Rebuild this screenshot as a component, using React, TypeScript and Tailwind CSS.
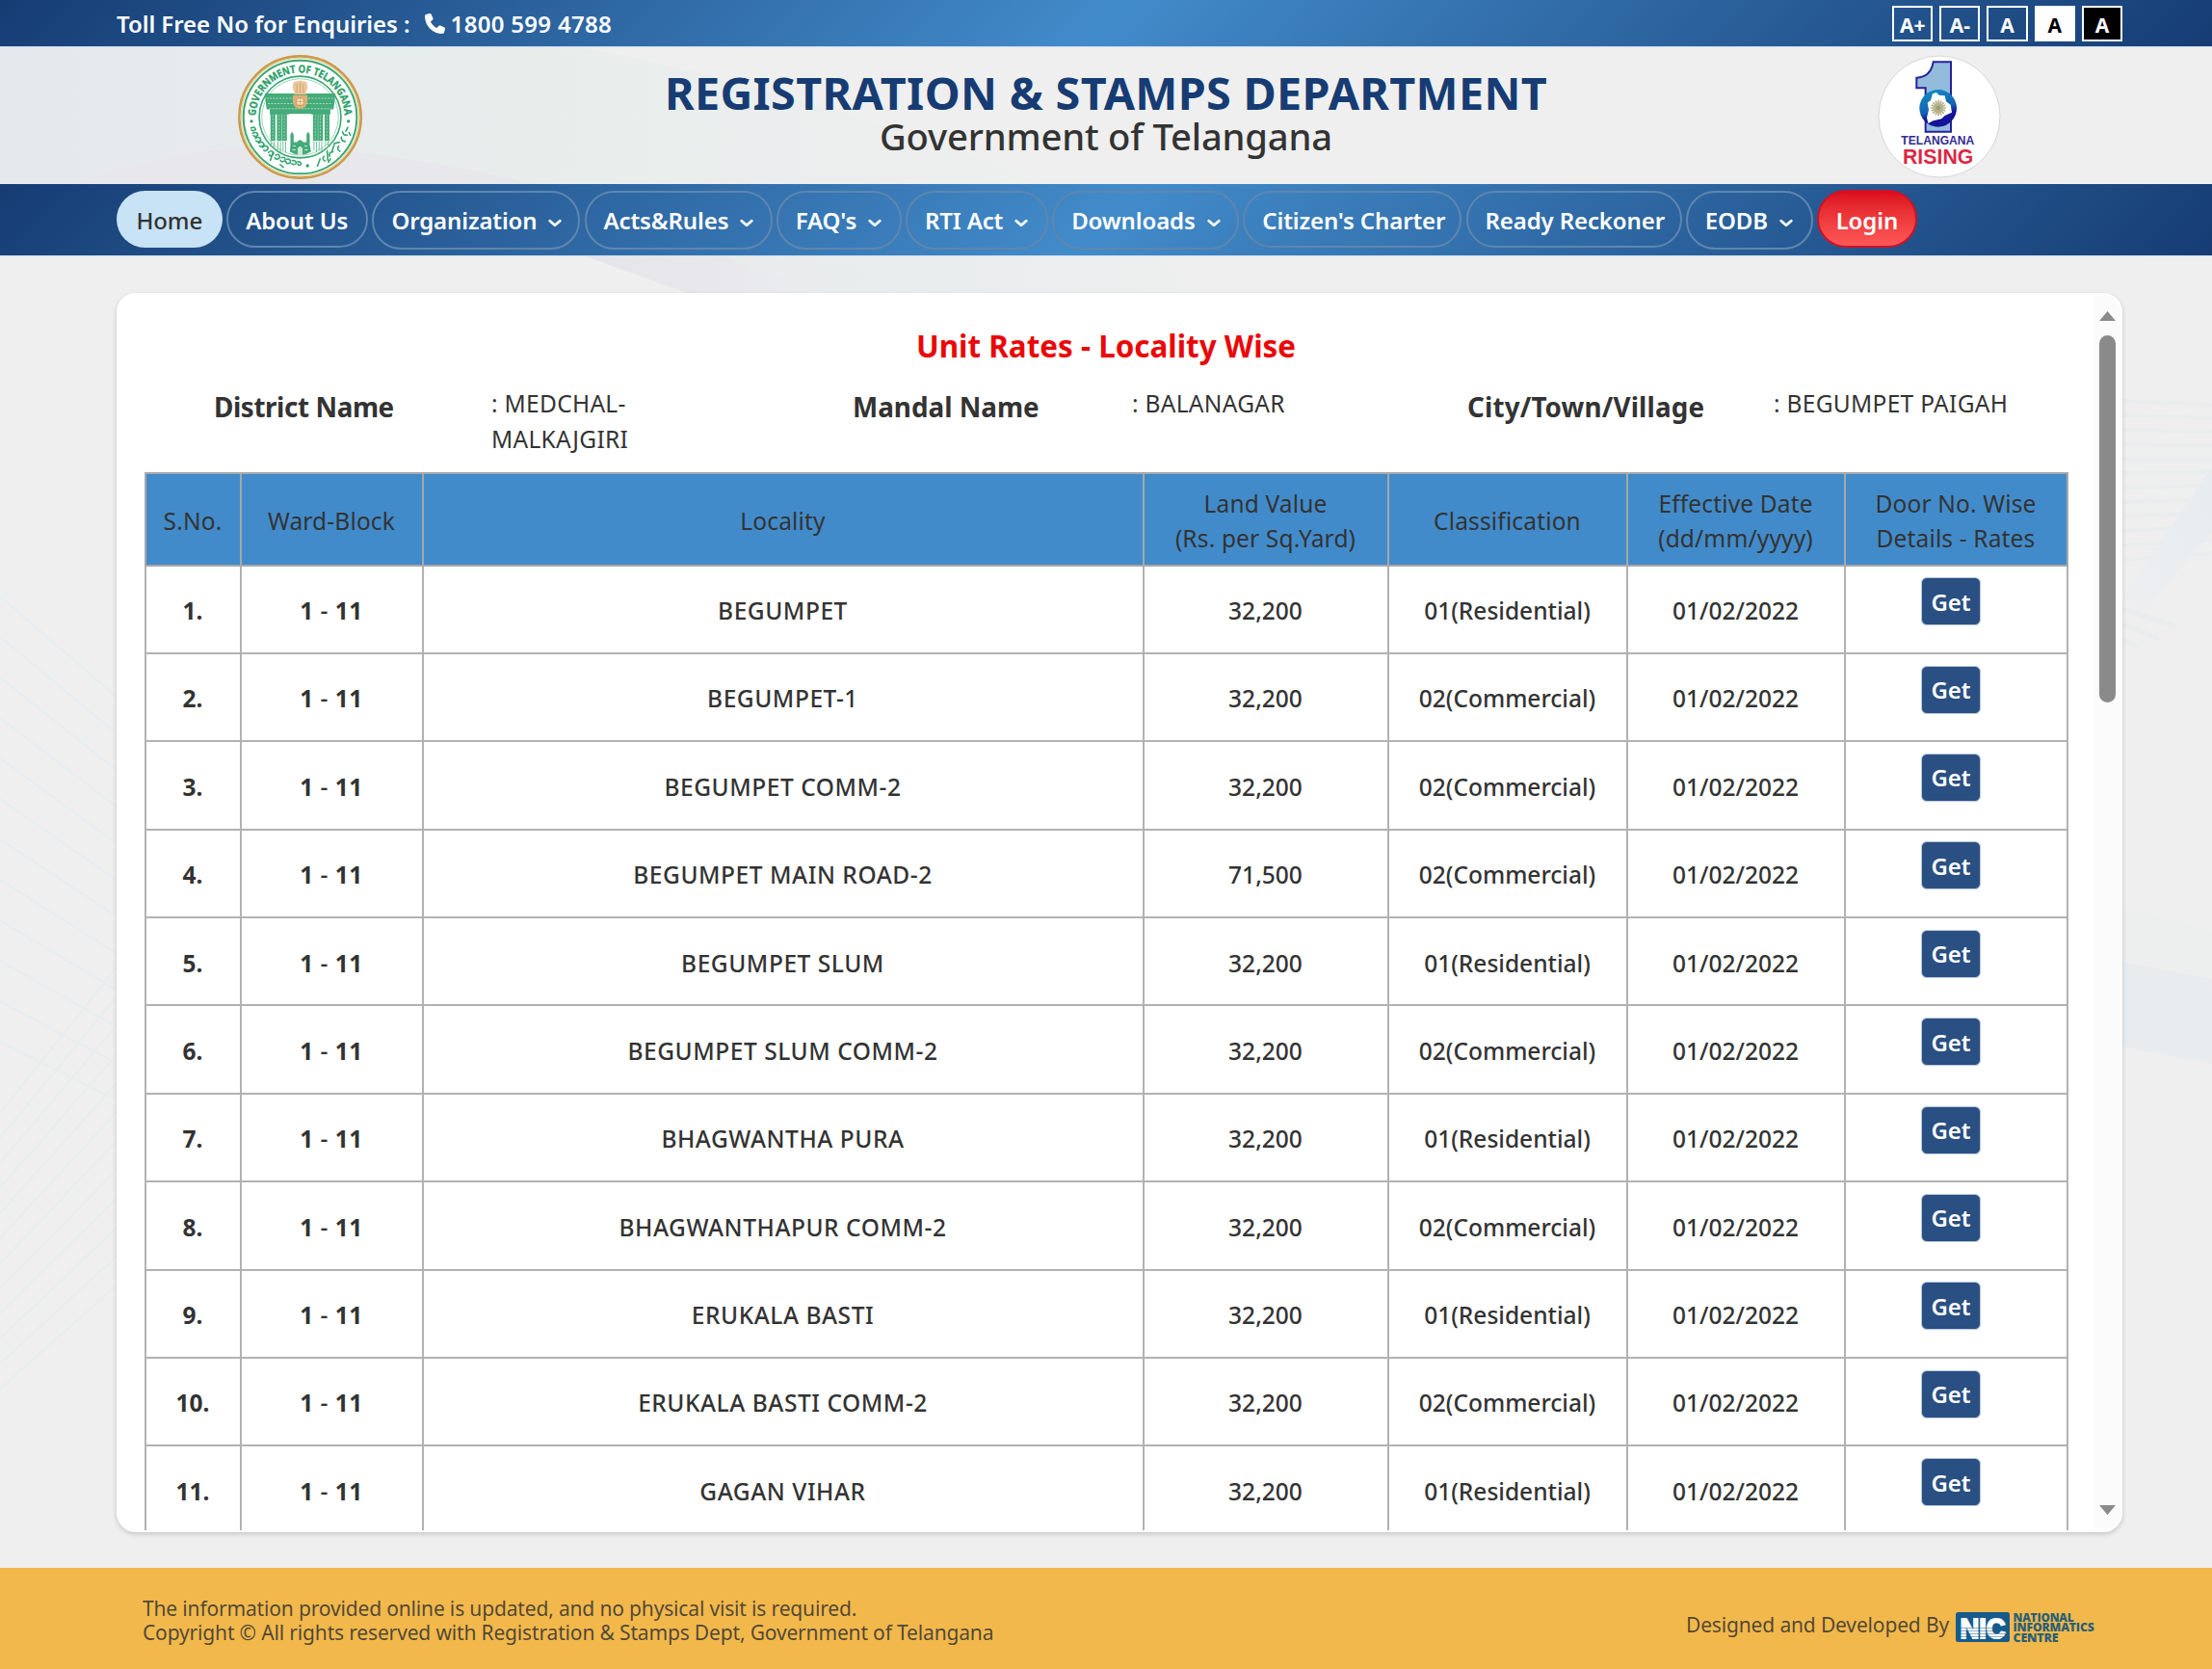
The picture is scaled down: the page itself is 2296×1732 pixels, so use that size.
import type { ReactNode } from "react";

const nav: { label: string; w: string; menu?: boolean }[] = [
  { label: "About Us", w: "w-[147px]" },
  { label: "Organization", w: "w-[216px]", menu: true },
  { label: "Acts&Rules", w: "w-[195px]", menu: true },
  { label: "FAQ's", w: "w-[130px]", menu: true },
  { label: "RTI Act", w: "w-[148px]", menu: true },
  { label: "Downloads", w: "w-[194px]", menu: true },
  { label: "Citizen's Charter", w: "w-[227px]" },
  { label: "Ready Reckoner", w: "w-[224px]" },
  { label: "EODB", w: "w-[132px]", menu: true },
];

const rows: [string, string, string][] = [
  ["BEGUMPET", "32,200", "01(Residential)"],
  ["BEGUMPET-1", "32,200", "02(Commercial)"],
  ["BEGUMPET COMM-2", "32,200", "02(Commercial)"],
  ["BEGUMPET MAIN ROAD-2", "71,500", "02(Commercial)"],
  ["BEGUMPET SLUM", "32,200", "01(Residential)"],
  ["BEGUMPET SLUM COMM-2", "32,200", "02(Commercial)"],
  ["BHAGWANTHA PURA", "32,200", "01(Residential)"],
  ["BHAGWANTHAPUR COMM-2", "32,200", "02(Commercial)"],
  ["ERUKALA BASTI", "32,200", "01(Residential)"],
  ["ERUKALA BASTI COMM-2", "32,200", "02(Commercial)"],
  ["GAGAN VIHAR", "32,200", "01(Residential)"],
];

const columns: { title: ReactNode; w: string }[] = [
  { title: "S.No.", w: "w-[99px]" },
  { title: "Ward-Block", w: "w-[189px]" },
  { title: "Locality", w: "w-[748px]" },
  { title: <>Land Value<br />(Rs. per Sq.Yard)</>, w: "w-[254px]" },
  { title: "Classification", w: "w-[248px]" },
  { title: <>Effective Date<br />(dd/mm/yyyy)</>, w: "w-[226px]" },
  { title: <>Door No. Wise<br />Details - Rates</>, w: "w-[231px]" },
];

function Emblem() {
  const pillars = [152, 172, 188, 284, 300, 320];
  return (
    <svg viewBox="51 21 386 386" className="h-[129px] w-[129px]">
      <circle cx="244" cy="214" r="189" fill="#fff" stroke="#c99a4b" strokeWidth="8" />
      <circle cx="244" cy="214" r="183" fill="none" stroke="#e4d3a0" strokeWidth="4" />
      <circle cx="244" cy="214" r="176" fill="none" stroke="#3aa873" strokeWidth="6" />
      <circle cx="244" cy="214" r="127" fill="none" stroke="#3aa873" strokeWidth="5" />
      <circle cx="244" cy="214" r="119" fill="none" stroke="#6fc09a" strokeWidth="2" />
      <path id="emblem-arc" d="M106 214 A138 138 0 0 1 382 214" fill="none" />
      <text fill="#2c9f67" stroke="#2c9f67" strokeWidth="1" fontFamily="'Open Sans', sans-serif" fontWeight="700" fontSize="33" textLength="424" lengthAdjust="spacingAndGlyphs">
        <textPath href="#emblem-arc" startOffset="4">GOVERNMENT OF TELANGANA</textPath>
      </text>
      <circle cx="93" cy="227" r="5" fill="#2c9f67" />
      <circle cx="394" cy="227" r="5" fill="#2c9f67" />
      <circle cx="267" cy="365" r="5" fill="#2c9f67" />
      <g fill="none" stroke="#3aa873" strokeWidth="5" strokeLinecap="round">
        <path d="M92 248q12-6 14 4q-8 8-13 2M97 264q14-6 16 6q-9 8-14 1M105 280q14-8 17 5q-8 9-15 3M115 295q12-9 17 4q-6 10-14 5M127 308q12-10 18 2q-4 12-14 7M146 324q10-10 16 2q-6 14-14 6M160 322l-8 26M168 332q14-6 12 8q-10 10-14 0M186 340q14-4 11 9q-11 8-14-1M182 362l10 8M203 345q14-2 10 11q-12 6-13-4M220 349q12-1 12 9q-10 6-14 0M237 353q10-1 10 8q-8 5-10-1" />
        <path d="M392 246l-6 12M376 260q2 12 14 10M396 262l4 8M372 276q-2 12 12 14M366 292l-16 4M364 304q-8 10 4 16M350 300l-6 18M346 322q-14 0-10 14M328 318l2 30M318 336q-8 10 4 14M306 344l-8 22M338 344l-6 10" />
      </g>
      <path d="M134 141H354L348 190H338V206H150V190H140Z" fill="#45ab78" />
      <path d="M140 156H348M144 172H344M148 188H340" stroke="#a9d9c0" strokeWidth="3" strokeDasharray="6 4" fill="none" />
      <path d="M210 204H278V290H210Z" fill="#fff" />
      {pillars.map((x) => (
        <g key={x}>
          <rect x={x} y="204" width="15" height="84" fill="#45ab78" />
          <path d={`M${x + 7} 208V286`} stroke="#a9d9c0" strokeWidth="3" strokeDasharray="5 5" />
          <path d={`M${x + 3} 290V${x < 160 || x > 310 ? 304 : 318}M${x + 11} 290V${x < 160 || x > 310 ? 308 : 324}`} stroke="#6fc09a" strokeWidth="3" />
        </g>
      ))}
      <path d="M214 300V268L219 260L224 268V292H234Q244 278 254 292H264V268L269 260L274 268V300L278 322Q244 342 212 322Z" fill="#45ab78" />
      <path d="M238 336V312Q244 302 250 312V336ZM222 304h8M258 304h8M220 316h10M258 316h10" fill="#cfeadd" stroke="#cfeadd" strokeWidth="3" />
      <path d="M222 112Q224 100 236 103Q244 97 252 103Q264 100 266 112Q270 124 262 134V144H226V134Q218 124 222 112Z" fill="#eac79b" />
      <path d="M222 146H266Q272 186 244 188Q216 186 222 146Z" fill="#e0b078" />
      <circle cx="244" cy="166" r="12" fill="#f6e3c8" stroke="#cf9955" strokeWidth="3" />
      <path d="M234 112v28M244 108v32M254 112v28M232 166h24M244 154v24" stroke="#cf9955" strokeWidth="2" fill="none" />
    </svg>
  );
}

function RisingLogo() {
  return (
    <svg viewBox="147 51 384 384" className="h-[128px] w-[128px]">
      <circle cx="339" cy="243" r="189" fill="#fff" stroke="#d6d6d6" strokeWidth="3" />
      <path d="M320 73H375V290H296V154H268V122Q312 120 320 73Z" fill="#93bbdc" stroke="#26219a" strokeWidth="6" />
      <defs>
        <linearGradient id="globe" x1="0" y1="0" x2="0.3" y2="1">
          <stop offset="0.1" stopColor="#1488c2" />
          <stop offset="0.6" stopColor="#1464b4" />
          <stop offset="0.8" stopColor="#14149a" />
        </linearGradient>
      </defs>
      <circle cx="335" cy="217" r="58" fill="url(#globe)" />
      <path d="M318 172L330 168L338 176L356 178L360 196L374 206L378 230L356 240L346 250L320 256L304 264L300 246L306 222L302 200L312 192Z" fill="#fff" />
      <g stroke="#b5b189" strokeWidth="5">
        <path d="M336 192V240M312 216H360M319 199L353 233M353 199L319 233M327 194L345 238M345 194L327 238M314 207L358 225M314 225L358 207" />
      </g>
      <circle cx="336" cy="216" r="6" fill="#8f9a78" />
      <text x="220" y="331" fill="#322c92" fontFamily="'Liberation Sans', sans-serif" fontWeight="700" fontSize="38" textLength="228" lengthAdjust="spacingAndGlyphs">TELANGANA</text>
      <text x="225" y="389" fill="#dc2745" fontFamily="'Liberation Sans', sans-serif" fontWeight="700" fontSize="65" textLength="220" lengthAdjust="spacingAndGlyphs">RISING</text>
    </svg>
  );
}

function NicLogo() {
  return (
    <svg viewBox="0 0 146 34" className="h-[34px] w-[146px] shrink-0 overflow-visible">
      <rect x="0" y="2" width="56" height="31" rx="2.500" fill="#175a8c" />
      <text x="4.500" y="28.500" fontFamily="'Liberation Sans', sans-serif" fontWeight="700" fill="#fff" stroke="#fff" strokeWidth="1.800" fontSize="30" textLength="47" lengthAdjust="spacingAndGlyphs">NIC</text>
      <path d="M4 18.500H52M4 21.500H52M4 24.500H52M4 27.500H52" stroke="#175a8c" strokeWidth="0.800" opacity="0.600" />
      <g fontFamily="'Open Sans', sans-serif" fontWeight="800" fill="#2a5f78" fontSize="12.200">
        <text x="59.500" y="11.600" textLength="63" lengthAdjust="spacingAndGlyphs">NATIONAL</text>
        <text x="59.500" y="22.200" textLength="84" lengthAdjust="spacingAndGlyphs">INFORMATICS</text>
        <text x="59.500" y="32.800" textLength="47" lengthAdjust="spacingAndGlyphs">CENTRE</text>
      </g>
    </svg>
  );
}

function Backdrop() {
  const fan = Array.from({ length: 12 }, (_, i) => i);
  return (
    <svg viewBox="0 0 2296 1732" className="absolute inset-0 h-full w-full">
      <defs>
        <linearGradient id="tint" x1="0" y1="0" x2="1" y2="0">
          <stop offset="0" stopColor="#e5e9ed" />
          <stop offset="0.5" stopColor="#e8edec" />
          <stop offset="1" stopColor="#eeefef" />
        </linearGradient>
        <linearGradient id="mauve" x1="0" y1="0" x2="1" y2="0">
          <stop offset="0" stopColor="#e5e4ea" />
          <stop offset="1" stopColor="#ebecee" />
        </linearGradient>
        <linearGradient id="sage" x1="0" y1="0" x2="1" y2="0">
          <stop offset="0" stopColor="#e9eceb" />
          <stop offset="0.5" stopColor="#eaedee" />
          <stop offset="1" stopColor="#eeefef" />
        </linearGradient>
        <linearGradient id="beam" x1="0" y1="1" x2="1" y2="0">
          <stop offset="0" stopColor="#edeff0" />
          <stop offset="1" stopColor="#e7ecf0" />
        </linearGradient>
      </defs>
      <path d="M0 48H600Q860 100 1090 192H0Z" fill="url(#tint)" />
      <path d="M70 192Q230 140 340 155Q470 168 556 192Z" fill="#e8e7eb" />
      <path d="M745 265L850 304H1250L1200 265Z" fill="url(#sage)" />
      <path d="M605 265L713 304H855L750 265Z" fill="url(#mauve)" />
      <g stroke="#e8edf0" strokeWidth="2.500" fill="none">
        {fan.map((i) => (
          <path key={i} d={`M0 ${619 + i * 42}L122 ${724 + i * 38}`} />
        ))}
      </g>
      <g stroke="#e9edec" strokeWidth="2.500" fill="none">
        {fan.map((i) => (
          <path key={i} d={`M0 ${1441 - i * 26}L122 ${1333 - i * 30}`} />
        ))}
      </g>
      <g stroke="#eaeded" strokeWidth="4" fill="none">
        {fan.map((i) => (
          <path key={i} d={`M2203 ${416 + i * 15}L2296 ${420 + i * 14}`} />
        ))}
        <path d="M2203 632L2258 650M2203 648L2240 662M2203 664L2222 672" strokeWidth="5" />
      </g>
      <path d="M2203 620L2296 484V552L2228 632Z" fill="url(#beam)" />
      <path d="M2203 940L2296 966V1018L2203 998Z" fill="#edefee" />
      <path d="M2203 998L2296 1016V1104L2203 1086Z" fill="#e8ecee" />
    </svg>
  );
}

function Field({ label, value, labelW, valueW }: { label: string; value: string; labelW: string; valueW: string }) {
  return (
    <>
      <div className={`${labelW} shrink-0 whitespace-nowrap pt-1 text-[27.800px] font-bold leading-[36.500px]`}>{label}</div>
      <div className={`${valueW} shrink-0 pt-px text-[24.500px] font-[450] leading-[36.500px] tracking-[0.300px]`}>{value}</div>
    </>
  );
}

export default function App() {
  const access = ["A+", "A-", "A", "A", "A"];
  const bar = "bg-[linear-gradient(135deg,#163c73_0%,#428bca_50%,#163c73_100%)]";
  return (
    <div className="relative flex h-[1732px] w-[2296px] flex-col overflow-hidden bg-[#efefef] font-['Noto_Sans',sans-serif] text-[#333]">
      <Backdrop />

      <div className={`relative flex h-12 shrink-0 items-center justify-between pl-[121px] pr-[93px] text-white ${bar}`}>
        <div className="flex items-center pt-px text-[24px] font-semibold leading-9">
          <span className="whitespace-pre tracking-[-0.050px]">Toll Free No for Enquiries :</span>
          <svg viewBox="0 0 512 512" className="ml-[15px] h-[21px] w-[21px]" fill="currentColor">
            <path d="M164.900 24.600c-7.700-18.600-28-28.500-47.400-23.200l-88 24C12.100 30.200 0 46 0 64C0 311.400 200.600 512 448 512c18 0 33.800-12.100 38.600-29.500l24-88c5.300-19.400-4.600-39.700-23.200-47.400l-96-40c-16.300-6.800-35.200-2.100-46.300 11.600L304.700 368C234.300 334.700 177.300 277.700 144 207.300L193.300 167c13.700-11.200 18.400-30 11.600-46.300l-40-96z" />
          </svg>
          <span className="ml-[6px] tracking-[0.300px]">1800 599 4788</span>
        </div>
        <div className="flex gap-[7px] pt-px">
          {access.map((a, i) => (
            <div
              key={i}
              className={`flex h-[37px] w-[42.200px] items-center justify-center border-2 border-white pt-[3px] text-[21px] font-bold leading-none ${i === 3 ? "bg-white text-black" : i === 4 ? "bg-black" : ""}`}
            >
              {a}
            </div>
          ))}
        </div>
      </div>

      <header className="relative flex h-[143px] shrink-0 items-center justify-between border-t border-[#c9dcf0] pl-[247px] pr-[219px]">
        <div className="pt-[2px]"><Emblem /></div>
        <div className="mr-[29px] flex flex-col items-center whitespace-nowrap pb-[5px]">
          <h1 className="text-[46.700px] font-bold leading-[46px] tracking-[0.350px] text-[#163c73]">REGISTRATION &amp; STAMPS DEPARTMENT</h1>
          <p className="text-[38.200px] font-[470] leading-[44px] tracking-[-0.180px]">Government of Telangana</p>
        </div>
        <div className="pt-[1px]"><RisingLogo /></div>
      </header>

      <nav className={`relative flex h-[75px] shrink-0 gap-[4.200px] border-b border-[#cfe0f0] pl-[120.500px] pt-[7px] text-[24px] font-semibold leading-none tracking-[-0.120px] text-white ${bar}`}>
        <div className="flex h-[59px] w-[110.500px] items-center justify-center rounded-[30px] bg-[#c8e3f6] pt-[2px] font-medium text-[#333]">Home</div>
        {nav.map((n) => (
          <div
            key={n.label}
            className={`flex items-center whitespace-nowrap rounded-[30px] border-2 border-[#5f86ae] pl-[18px] ${n.w} ${n.menu ? "h-[61px]" : "h-[59px] pt-[2px]"}`}
          >
            {n.label}
            {n.menu && (
              <svg viewBox="0 0 14 9" className="ml-[12px] mt-[6px] h-[9px] w-[14px]" fill="none" stroke="currentColor" strokeWidth="2.800" strokeLinecap="round" strokeLinejoin="round">
                <path d="M1.800 2.200L7 6.800L12.200 2.200" />
              </svg>
            )}
          </div>
        ))}
        <div className="flex h-[60px] w-[104px] -translate-y-px items-center justify-center rounded-[30px] border-2 border-[#cf1226] bg-linear-to-b from-[#dc0a1c] to-[#ff5757] pt-[3px]">Login</div>
      </nav>

      <main className="relative mt-[38px] ml-[120.500px] flex h-[1286px] w-[2082.500px] shrink-0 overflow-hidden rounded-[20px] border-2 border-white bg-white shadow-[0_2px_5px_rgba(0,0,0,0.18)]">
        <div className="h-full w-[2050.500px] shrink-0 overflow-hidden pl-[27px]">
          <h2 className="mt-[31px] w-[1997px] text-center text-[31.400px] font-bold leading-[44px] text-[#ea0808]">Unit Rates - Locality Wise</h2>
          <div className="mt-[19px] flex h-[90px] pl-[72.500px]">
            <Field label="District Name" value=": MEDCHAL-MALKAJGIRI" labelW="w-[288px] tracking-[-0.400px]" valueW="w-[375px] pr-[200px]" />
            <Field label="Mandal Name" value=": BALANAGAR" labelW="w-[290px]" valueW="w-[348px]" />
            <Field label="City/Town/Village" value=": BEGUMPET PAIGAH" labelW="w-[318px] tracking-[0.150px]" valueW="w-[260px] whitespace-nowrap" />
          </div>
          <table className="w-[1995px] table-fixed border-collapse text-center text-[24.500px] leading-[36.500px]">
            <thead>
              <tr className="h-[95.500px] bg-[#428bca]">
                {columns.map((c, i) => (
                  <th key={i} className={`${c.w} border-2 border-[#a6a8aa] p-0 pt-[5px] font-[430] tracking-[0.150px]`}>{c.title}</th>
                ))}
              </tr>
            </thead>
            <tbody>
              {rows.map(([loc, value, cls], i) => (
                <tr key={loc} className="h-[91.400px] font-[460] [&>td]:border-2 [&>td]:border-[#b2b2b2] [&>td]:p-0 [&>td]:pt-[4px]">
                  <td className="font-bold">{i + 1}.</td>
                  <td className="tracking-[0.500px]"><b>1</b> - <b>11</b></td>
                  <td className="tracking-[0.550px]">{loc}</td>
                  <td>{value}</td>
                  <td>{cls}</td>
                  <td>{"01/02/2022"}</td>
                  <td>
                    <div className="flex justify-center pb-[20px] pr-[10px]">
                      <button className="h-[50px] w-[62px] rounded-[6px] border border-[#b9c8dc] bg-[#2a4f82] pt-px text-[24px] font-semibold leading-none text-white">Get</button>
                    </div>
                  </td>
                </tr>
              ))}
            </tbody>
          </table>
        </div>
        <div className="flex h-full w-[28px] shrink-0 flex-col items-center bg-[#fbfbfb] pb-4 pt-[17px]">
          <svg viewBox="0 0 17 10" className="h-[10px] w-[17px] shrink-0"><path d="M8.500 0L17 10H0Z" fill="#8a8a8a" /></svg>
          <div className="mt-[15px] h-[381px] w-[17px] rounded-full bg-[#8a8a8a]" />
          <svg viewBox="0 0 17 10" className="mt-auto h-[10px] w-[17px] shrink-0"><path d="M0 0H17L8.500 10Z" fill="#8a8a8a" /></svg>
        </div>
      </main>

      <footer className="relative mt-auto flex h-[105px] shrink-0 items-center justify-between bg-[#f2b84b] pl-[148px] pr-[120px] text-[21px] leading-[25px] text-[#333]/85">
        <div className="pt-[4px] tracking-[-0.160px]">
          <p>The information provided online is updated, and no physical visit is required.</p>
          <p>Copyright © All rights reserved with Registration &amp; Stamps Dept, Government of Telangana</p>
        </div>
        <div className="flex items-center gap-[7px] pt-[16px] tracking-[-0.150px]">
          <span className="pb-[2px]">Designed and Developed By</span>
          <NicLogo />
        </div>
      </footer>
    </div>
  );
}
